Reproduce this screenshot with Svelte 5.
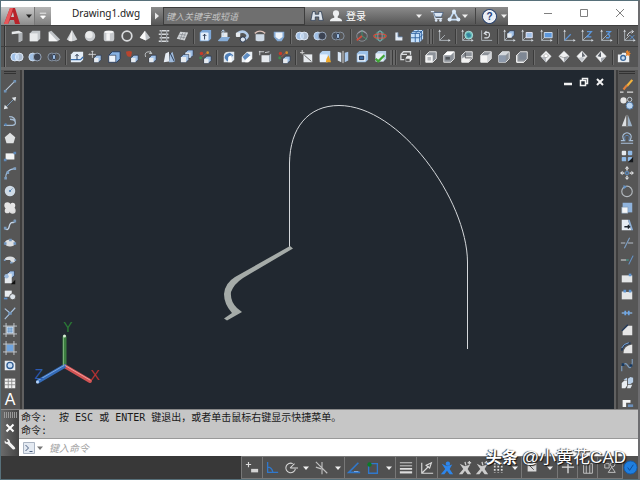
<script>
  const L = '#e6eaee', B = '#a0c0e6', D = '#1d2b45';
  const box = (x, y, s, c = L) => `<rect x="${x}" y="${y}" width="${s}" height="${s}" rx="1" fill="${c}"/>`;
  const cube = (x, y, s, a = L, b = B) =>
    `<path d="M${x} ${y + 3}l3-3h${s}v${s}l-3 3h-${s}z" fill="${b}" stroke="${D}" stroke-width=".7"/><rect x="${x}" y="${y + 3}" width="${s}" height="${s}" fill="${a}"/>`;
  const axes = `<path d="M3 1.500V13H15M3 13l6-6" fill="none" stroke="#b4bac1"/><path d="M1.500 3L3 .5 4.500 3zM13 11.500l2.500 1.500-2.500 1.500z" fill="#d3d7dc"/>`;
  const wire = (inner) => `<path d="M2 6l4-4h8v8l-4 4H2z" fill="#8d9299" stroke="#f0f0f0"/>${inner}`;
  const gem = (inner) => `<path d="M8 1l6 6-6 7-6-7z" fill="#f0f1f2" stroke="#c9ccd0" stroke-width=".6"/>${inner}`;

  const icons = {
    polysolid: '<path d="M2 3l8-1 4 2v9l-4 2V5L2 6z" fill="#e6e8ea"/><path d="M10 5v10l4-2V4z" fill="#aeb2b6"/>',
    box: '<path d="M2 5l3-3h9v9l-3 3H2z" fill="#c4c8cb"/><path d="M2 5h9v9H2z" fill="#e9ebec"/>',
    wedge: '<path d="M2 3l3-1 10 10-3 2H2z" fill="#bfc3c7"/><path d="M2 3v11h10z" fill="#f4f5f6"/>',
    cone: '<path d="M8 1l6 11q-6 4-12 0z" fill="#cfd2d5"/><path d="M8 1v13q-3 0-4-1z" fill="#efefef"/>',
    sphere: '<circle cx="8" cy="8" r="6" fill="#c9ccd0"/><circle cx="7" cy="6.500" r="4" fill="#eaebec"/>',
    cylinder: '<rect x="2" y="2" width="12" height="12" rx="3" fill="#c6c9cc"/><path d="M5 5h4v8H5z" fill="#f3f3f3"/><ellipse cx="8" cy="3.500" rx="5" ry="1.500" fill="#f6f6f6"/>',
    torus: '<circle cx="8" cy="8" r="5.500" fill="none" stroke="#d9dbdd" stroke-width="2"/>',
    pyramid: '<path d="M8 2l6 8-5 3-7-3z" fill="#bfc3c7"/><path d="M8 2l1 11-7-3z" fill="#fafafa"/>',
    helix: '<path d="M3 2h11M2 6h11M3 10h11M2 14h11" stroke="#d6d9dc" stroke-width="1.800"/><path d="M5 1v14M11 1v14" stroke="#9da1a6" stroke-width="1.500"/>',
    planar: '<path d="M6 3l9 1-4 9-9-2z" fill="#d3d6d9"/><path d="M5 6l8 1M4 9l8 1M9 4l-3 8M12 4l-3 8" stroke="#85898f" stroke-width=".8"/>',
    extrude: `<path d="M2 4l3-3h10v10l-3 3H2z" fill="#7ea8d8"/>${box(3, 4, 9, '#e3effb')}<path d="M7.500 12V6M5.500 8l2-2 2 2" stroke="${D}" fill="none"/>`,
    presspull: `<path d="M5 4h7v8H5z" fill="${L}"/><path d="M1 13l4-4h10l-3 5H2z" fill="#86add8"/><path d="M7 8V1M5 3l2-2 2 2" stroke="#b9d2ef" fill="none"/>`,
    sweep: `<path d="M3 5q6-4 10 0t-3 7" fill="none" stroke="#b4cdea" stroke-width="3"/>${box(1, 4, 5)}<circle cx="9" cy="12" r="3" fill="#dce4ee" stroke="${D}"/>`,
    revolve: `<path d="M2 5q6-5 12 0" fill="none" stroke="#dbc0b8" stroke-width="1.500"/><path d="M3 6h10v7q-5 2-10 0z" fill="#cfdae6"/>`,
    loft: `<path d="M2 3h12v6l-3 5H6L2 9z" fill="#83a9d4"/><path d="M4 4h8v5l-4 3-4-3z" fill="#eff4fa"/>`,
    union: `<circle cx="5.500" cy="8" r="4.500" fill="${B}" stroke="#e5eefa"/><circle cx="10.500" cy="8" r="4.500" fill="#c6daf2" fill-opacity=".8" stroke="#e5eefa"/>`,
    subtract: `<circle cx="5.500" cy="8" r="4.500" fill="${B}" stroke="#d2e0f2"/><circle cx="10.500" cy="8" r="4.500" fill="#3c4352" stroke="#a5b5c9"/>`,
    intersect: `<circle cx="5.500" cy="8" r="4.500" fill="#49505c" stroke="#8c99aa"/><circle cx="10.500" cy="8" r="4.500" fill="none" stroke="#8c99aa"/><path d="M8 4.500q4 3.500 0 7-4-3.500 0-7" fill="${B}" stroke="${D}"/>`,
    orbit: '<circle cx="8" cy="8" r="6" fill="none" stroke="#8a9098"/><path d="M8 1v7l6 4" stroke="#3c9d76" fill="none"/><path d="M8 8l-6 5" stroke="#d24b3b" stroke-width="2"/><path d="M3 5l5-3 5 3" stroke="#aab" fill="none"/>',
    gizmo: '<circle cx="8" cy="8" r="5" fill="none" stroke="#3fa08a" stroke-width="1.500"/><ellipse cx="8" cy="8" rx="7" ry="2.500" fill="none" stroke="#d2503f" stroke-width="1.500"/><ellipse cx="8" cy="8" rx="2.500" ry="6" fill="none" stroke="#94a2b6"/>',
    lshape: '<path d="M5 4h3v5h5v4H5z" fill="#e3ecf7"/><path d="M8 4v5h5" stroke="#6d8db3" fill="none"/>',
    mesh: `<path d="M1 5l4-4h10v10l-4 4H1z" fill="#c6e0fa"/><path d="M1 10h10l4-4M6 5v10M1 5h10v10M11 5l4-4M3 3h10v10M6 5l4-4" stroke="#2b5f9d" fill="none"/>`,
    ucs: axes,
    ucsBlue: axes + '<path d="M3 13l7-7" stroke="#5b93d6" stroke-width="1.500"/>',
    ucsWorld: axes + '<circle cx="10" cy="7" r="4.500" fill="#65bdb5" stroke="#b5dfe3"/><path d="M7 6q3-3 5 0t-3 4" fill="#3784a0"/>',
    ucsPrev: '<path d="M3 1.500V13H15" fill="none" stroke="#b4bac1"/><path d="M6 10q6 1 6-3.500T6 5M8.500 2.500L6 5l3 2" fill="none" stroke="#dce2e8" stroke-width="1.300"/>',
    ucsFace: axes + `<g transform="translate(6,2)">${cube(0, 0, 5)}</g>`,
    ucsObj: axes + `<path d="M7 4h7v6H7z" fill="${B}" stroke="#eef"/>`,
    ucsView: axes + '<path d="M6 4h9v6H6z" fill="#5c97dc" stroke="#d6e5f6"/>',
    ucsZ: axes + '<path d="M8 3h5L8 9h5" fill="none" stroke="#5c97dc" stroke-width="1.500"/>',
    ucs3: axes + '<path d="M8 3h5l-3 3q4 1 1 4H8" fill="none" stroke="#5c97dc" stroke-width="1.500"/>',
    ucsX: axes + '<path d="M6 8q1-5 7-5M11 1l2 2-2 2" fill="none" stroke="#e1e5ea"/><path d="M9 7l5 5M14 7l-5 5" stroke="#5c97dc"/>',
    extrFace: `<path d="M1 5l3-3h11v9l-3 3H1z" fill="#e5eef8"/><path d="M1 11h11l3-3" fill="none" stroke="#3c70ad" stroke-width="1.500"/><path d="M8 11V5M6 7l2-2 2 2" stroke="${D}" fill="none"/>`,
    moveFace: `<path d="M5 1v8M1 5h8M4 2l1-1 1 1M2 4L1 5l1 1" stroke="#d2d4d7" fill="none"/><g transform="translate(7,6)">${cube(0, 0, 5)}</g>`,
    offFace: `<path d="M2 6l4-4h9v8l-4 4H2z" fill="#89b3e3" stroke="#1f3557"/><path d="M2 6h8v8H2z" fill="#eff5fc" stroke="${D}" stroke-width=".7"/>`,
    delFace: `<path d="M1 2q4-2 7 0l-1 5q-3 2-5-1z" fill="#b8452f"/><g transform="translate(7,6)">${cube(0, 0, 5)}</g>`,
    rotFace: `<path d="M3 8Q1 2 7 2l3 2M8 1l2 3H7" stroke="#c5c9cd" fill="none"/><g transform="translate(7,6)">${cube(0, 0, 5)}</g>`,
    taper: `<path d="M2 14L4 4l4-2v11z" fill="#e5ebf2"/><path d="M8 14l1-9 3-3 3 11-3 1z" fill="#9fbbdc"/><path d="M9 3l5 10" stroke="${D}"/>`,
    copyFace: `<g transform="translate(6,0)">${cube(0, 0, 6)}</g><g transform="translate(1,5)">${cube(0, 0, 6)}</g>`,
    colFace: `<circle cx="4" cy="4" r="2" fill="#c63b2b"/><circle cx="11" cy="3" r="1.500" fill="#d9942c"/><circle cx="3" cy="9" r="1.500" fill="#3d8f4d"/><path d="M10 3l-5 5" stroke="#c44f39"/><g transform="translate(7,7)">${cube(0, 0, 5)}</g>`,
    fillet: `<path d="M2 14V7q0-5 6-5h6v9l-3 3z" fill="#dfe7ef"/><path d="M3 9q0-5 6-6l4 3-7 7z" fill="#4f7fb8"/><path d="M7 9q0-2 4-3v8H7z" fill="#fff"/>`,
    chamfer: `<path d="M2 8l6-6h6v8l-4 4H2z" fill="#e9eef3"/><path d="M3 8l5-5 4 3-6 6z" fill="#5f8dc2"/><path d="M6 11l6-5v5l-3 3H6z" fill="#fff"/>`,
    copyEdge: `<path d="M1 2h6M2 1v5M8 3l5-1" stroke="#d7dade"/><path d="M4 6h9v8H4z" fill="${L}"/><path d="M13 6l2-2v8l-2 2" fill="#a6b6c8"/>`,
    imprint: `<path d="M4 5h10v9H4z" fill="${L}"/><path d="M5 6l8 7" stroke="#555"/><path d="M0 3h5M2.500 0v5" stroke="#ddd"/>`,
    clean: `<path d="M2 4l3-3h9v11H2z" fill="#b4d1ef"/><path d="M2 5h9v9H2z" fill="#e9f3fd"/><path d="M9 14q0-4 3-8l3 8z" fill="#eda728"/>`,
    separate: '<path d="M2 2l4 1v11l-4-2z" fill="#dbe8f6"/><path d="M14 2l-4 1v11l4-2z" fill="#a9c8ec"/><path d="M8 1v14" stroke="#e8e8e8"/>',
    shell: `<path d="M2 4l3-3h10v10l-3 3H2z" fill="#9cc1e8"/><path d="M3 5h9v8H3z" fill="#e7f1fb"/><path d="M5 7h5v4H5z" fill="#3a68a2" stroke="${D}"/>`,
    check: '<path d="M3 4l3-3h9v9l-3 3H3z" fill="#b7cfe8"/><path d="M3 4h9v9H3z" fill="#e6eef6"/><path d="M3 10l3 3 7-7" stroke="#3fa536" stroke-width="2.500" fill="none"/>',
    views: '<path d="M1 5l3-3h8v4M1 5h7M1 5v6h4" fill="none" stroke="#dadde0" stroke-width="1.500"/><path d="M6 9l2-3h6v5l-2 3H6z" fill="#e8eaec" stroke="#333" stroke-width=".7"/><path d="M7 10h4v3H7z" fill="#555"/>',
    vTop: wire('<path d="M2 6h8v8H2z" fill="#f3f3f3"/><path d="M4 8h4v4H4z" fill="#b9bcc0"/>'),
    vBot: wire('<path d="M2 6l4-4h8l-4 4z" fill="#fff"/><path d="M4 8h5v3H4z" fill="#54585d"/>'),
    vLeft: wire('<path d="M2 10l4-3h8l-4 7H2z" fill="#f1f1f1"/><path d="M6 3v6h7" stroke="#4a4d51" fill="none"/>'),
    vRight: wire('<path d="M2 6h8v8H2z" fill="#f4f4f4"/><path d="M10 6l4-4v8l-4 4z" fill="#d1d4d8"/>'),
    vFront: wire('<path d="M2 6h8v8H2z" fill="#8d99ab"/><path d="M2 6l4-4h8l-4 4z" fill="#d3d7dc"/>'),
    vBack: wire('<path d="M5 3h8v8H5z" fill="#7e8794"/><path d="M2 6v8h8" stroke="#fff" fill="none"/>'),
    gSW: gem('<path d="M8 8v6L3 8z" fill="#b6bac0"/><path d="M8 4l3 3-3 2-3-2z" fill="#fff" stroke="#888" stroke-width=".7"/>'),
    gSE: gem('<path d="M8 8v6l5-6z" fill="#a6abb2"/><path d="M3 7l5 2 5-2" stroke="#888" fill="none" stroke-width=".7"/>'),
    gNE: gem('<path d="M8 2v6l4-1z" fill="#666c74"/><path d="M8 8l-4 1 4 4 3-4z" fill="#c2c6cb"/>'),
    gNW: gem('<path d="M8 2v6L4 7z" fill="#5a6068"/><path d="M8 9l5-1-5 6z" fill="#a4a9b1"/>'),
    camera: '<path d="M1 5h4l1-2h4l1 2h3v9H1z" fill="#e9edf1"/><circle cx="7" cy="9" r="3.500" fill="#38679c"/><circle cx="7" cy="9" r="2" fill="#c9dcf0"/><path d="M12 0l1 2 2-1-1 2 2 1-2 1 1 2-3-1-2 1 1-3-1-2z" fill="#e8842c"/>',

    line: '<path d="M3 13L13 3" stroke="#b9c8d8" stroke-width="1.200"/><path d="M1 12.500h3v3H1zM12 1h3v3h-3z" fill="#6f93b8"/>',
    xline: '<path d="M3 13L13 3" stroke="#7da1c4"/><path d="M1 15l1-5 4 4zM15 1l-1 5-4-4z" fill="#dfe3e7"/>',
    pline: '<path d="M1 13h10q4-1 3-4t-6-3M7 3q7 0 7 6" fill="none" stroke="#a5bbd2" stroke-width="1.500"/><circle cx="3" cy="12" r="1.500" fill="#5483b4"/>',
    polygon: '<path d="M8 2l6 5-2 7H4L2 7z" fill="#e0e2e3"/>',
    rect: '<path d="M3 5h10v7H3z" fill="#f2f4f5"/><path d="M1 11h3v3H1zM12 3h3v3h-3z" fill="#5e89b9"/>',
    arc: '<path d="M3 14Q3 4 13 3" fill="none" stroke="#a9c3df" stroke-width="1.300"/><path d="M1.500 12.500h3v3h-3zM12 1.500h3v3h-3zM4 6h3v3H4z" fill="#7f9fc0"/>',
    circle: '<circle cx="8" cy="8" r="6" fill="#cfdbe6"/><path d="M8 8l3-3" stroke="#6f94bb"/><circle cx="8" cy="8" r="1.200" fill="#4d7dae"/>',
    cloud: '<circle cx="5" cy="5" r="3.500" fill="#e4e4e4"/><circle cx="11" cy="5" r="3" fill="#e8e8e8"/><circle cx="5" cy="11" r="3" fill="#e2e2e2"/><circle cx="11" cy="11" r="3.500" fill="#ddd"/><path d="M3 4h10v8H3z" fill="#e4e4e4"/>',
    spline: '<path d="M2 12q4 3 5-2t4-5q2 1 3-3" fill="none" stroke="#c6d6e8" stroke-width="1.500"/><path d="M1 10h3v3H1zM12 2h3v3h-3z" fill="#7899bb"/>',
    ellipse: '<ellipse cx="8" cy="8" rx="6" ry="4" fill="#dcdfe2"/><path d="M1 7h3v3H1zM12 7h3v3h-3zM7 3h3v3H7z" fill="#6c92bd"/>',
    earc: '<path d="M2 8q0-4 6-4t6 4q0 3-4 3l-2-3z" fill="#dcdfe2"/><path d="M1 7h2v2H1zM13 7h2v2h-2zM8 10h3v2H8z" fill="#7d9fc4"/>',
    insert: `<g transform="translate(5,0)">${cube(0, 0, 5)}</g><path d="M2 8h8v6H2z" fill="${L}"/><circle cx="4" cy="6" r="2.500" fill="#9dbbdf"/><path d="M14 10v5H9z" fill="#111"/>`,
    block: '<path d="M2 3h8v7H2z" fill="#e9edf1"/><circle cx="11" cy="10" r="3.500" fill="#dce3ea" stroke="#555"/><path d="M1 11h4v2H1z" fill="#5d8fc9"/>',
    point: '<path d="M2 3l6 5M2 15L14 2" stroke="#a9c3df" fill="none" stroke-width="1.300"/><path d="M6 7h4v3H6z" fill="#7095bd"/>',
    hatch: '<path d="M4 4h8v8H4z" fill="#d7e7f8"/><path d="M3.500 0v16M12.500 0v16M0 3.500h16M0 12.500h16" stroke="#cbd1d7"/><path d="M5 6h6M5 8h6M5 10h6M6 5v6M8 5v6M10 5v6" stroke="#4d83bd" stroke-width=".7"/>',
    gradient: '<path d="M4 4h8v8H4z" fill="#6fa4de"/><path d="M3.500 0v16M12.500 0v16M0 3.500h16M0 12.500h16" stroke="#cbd1d7"/>',
    region: '<path d="M2 3h9l3 3v8H2z" fill="#e5eaf0"/><circle cx="8" cy="8.500" r="3.500" fill="#c7dcf3" stroke="#315e93" stroke-width="1.500"/>',
    table: '<path d="M2 3h12v11H2z" fill="#f2f2f2"/><path d="M2 6h12M2 10h12M6 3v11M10 3v11" stroke="#888"/>',

    erase: '<path d="M14 1L8 8" stroke="#f2b33d" stroke-width="2.500"/><path d="M8 7l-4 5" stroke="#e0803c" stroke-width="2.500"/><path d="M0 15h4M8 15h7" stroke="#d9d9d9" stroke-width="1.200"/>',
    copy: '<circle cx="4" cy="5" r="3.500" fill="#e6e6e6"/><circle cx="11" cy="4" r="2.500" fill="none" stroke="#c9d3de"/><circle cx="11" cy="11" r="4" fill="#bdd6f0" stroke="#4c76a5"/>',
    mirror: '<path d="M7 1v13H2z" fill="#dcdfe2"/><path d="M9 1v13h5z" fill="#9aafc4"/><path d="M8 1v14" stroke="#999"/>',
    offset: '<path d="M1 14h14M1 11h4Q2 7 4 4q4-4 8 0 2 3-1 7h4" stroke="#a9c0da" fill="none" stroke-width="1.300"/><path d="M6 11Q4 5 8 5t2 6" fill="none" stroke="#5f8cc0"/>',
    array: `${box(2, 2, 5)}${box(9, 2, 5, '#8fb9e6')}${box(2, 9, 5, '#8fb9e6')}${box(9, 9, 5, '#8fb9e6')}<path d="M15 9v6H9z" fill="#15181c"/>`,
    move: '<path d="M8 0l2.500 3h-5zM8 16l2.500-3h-5zM0 8l3-2.500v5zM16 8l-3-2.500v5z" fill="#d9dbdd"/><path d="M8 3v2M8 11v2M3 8h2M11 8h2" stroke="#ccc" stroke-width="2"/><path d="M6.500 6.500h3v3h-3z" fill="none" stroke="#5f98d8"/>',
    rotate: '<circle cx="8" cy="8.500" r="6" fill="none" stroke="#b4babf" stroke-width="1.300"/><path d="M4 1l4 2-4 3z" fill="#6795c8"/>',
    scale: '<path d="M3 2h11v11H3z" fill="#8fb3dc"/><path d="M2 7h7v7H2z" fill="#f3f5f7" stroke="#7690ad" stroke-width=".6"/>',
    stretch: '<path d="M2 2h7l4 12H2z" fill="#e6edf5"/><path d="M9 2h2l4 12h-2z" fill="#8fb3dc"/><path d="M5 10h6M9 8l2 2-2 2" stroke="#1c2530" fill="none" stroke-width="1.500"/>',
    trim: '<path d="M1 8h5M9 8h6" stroke="#b3bcc6" stroke-width="1.200"/><path d="M5 14l6-12" stroke="#7da0c6" stroke-width="1.200"/>',
    extend: '<path d="M1 8h6" stroke="#d3d6d9" stroke-width="1.200"/><path d="M7 8h3" stroke="#38af9b"/><path d="M10 13l5-10" stroke="#6695c9" stroke-width="1.200"/>',
    breakPt: '<path d="M2 5h12v8H2z" fill="#e4e6e7"/><path d="M10 3h3v3h-3z" fill="#5e95d2"/>',
    brk: '<path d="M2 4h12v9H2z" fill="#e4e6e7"/><path d="M4 2h3v3H4zM10 2h3v3h-3z" fill="#5e95d2"/><path d="M7 4h3" stroke="#555"/>',
    join: '<path d="M2 8h12" stroke="#8ab4e2" stroke-width="1.500"/><path d="M5 5.500h2v5H5zM9 5.500h2v5H9z" fill="#6da7e8"/>',
    chamferE: '<path d="M3 14V9l6-6h5v11z" fill="#e6e6e6"/><path d="M2 9l7-7" stroke="#23395a" stroke-width="1.500"/>',
    filletE: '<path d="M4 14q0-9 10-10v10z" fill="#e6e6e6"/><path d="M2 11Q3 3 12 2.500" fill="none" stroke="#23395a" stroke-width="2"/><path d="M2 8q2-5 8-6" fill="none" stroke="#8db8ea"/>',
    blend: '<path d="M3 9q3-5 6 0t5-3M2 9v6M14 1v5" fill="none" stroke="#7e9ec0" stroke-width="1.300"/><path d="M2 6h3v3H2zM11 7h3v3h-3z" fill="#173a62"/>',
    explode: '<path d="M2 8l3-3h3v6l-2 3H2z" fill="#e9edf2"/><path d="M9 3l3-2 3 1v5l-3 2H9z" fill="#b9cfe7"/><path d="M9 10h5l-2 4H8z" fill="#e0e6ec"/><path d="M4 4l4-2v3z" fill="#b9cfe7"/>',
    order: '<path d="M3 8h9v3H7v5H3z" fill="#f4f4f4"/><path d="M9 13h6v3H9z" fill="#6b8fba"/>',

    binoc: '<path d="M3 3h3v3h4V3h3l2 10h-5V9H6v4H1z" fill="#dde4ec" stroke="#23334c" stroke-width=".8"/>',
    user: '<circle cx="8" cy="5" r="3.500" fill="#eef0f2"/><path d="M1 14q0-3 5-4V8h4v2q5 1 5 4z" fill="#eef0f2"/>',
    cart: '<path d="M1 3h3l2 8h8" fill="none" stroke="#dbe7f5" stroke-width="1.500"/><path d="M4 4h11l-2 5H6z" fill="#dbe7f5" stroke="#2c4a73" stroke-width=".7"/><circle cx="7" cy="13" r="1.500" fill="#dbe7f5"/><circle cx="12" cy="13" r="1.500" fill="#dbe7f5"/>',
    a360: '<path d="M8 3L3 12h10z" fill="none" stroke="#c4dcf5" stroke-width="2"/><circle cx="8" cy="3" r="2.300" fill="#dcebfa"/><circle cx="3" cy="12" r="2.300" fill="#dcebfa"/><circle cx="13" cy="12" r="2.300" fill="#dcebfa"/>',
    wrench: '<path d="M2 4q-1 4 3 4l6 6q2 1 3-1 0-1-1-2L8 6Q8 2 4 2l2 3-2 1z" fill="#f1f1f1"/>',

    sInfer: '<path d="M4 1v6M1 4h6" stroke="#ddd" stroke-width="1.300"/><path d="M7 9h8v4H7z" fill="#d4d4d4"/>',
    sOrtho: '<path d="M3 1v12h12M3 7q5 0 6 6" stroke="#3078cc" fill="none" stroke-width="1.500"/>',
    sPolar: '<path d="M13 9A5.500 5.500 0 1 1 10 3M7 8h9M7 8l5-5" stroke="#d8d8d8" fill="none" stroke-width="1.200"/>',
    sIso: '<path d="M1 1l13 13M8 1v14M1 7l6 2" stroke="#c0c0c0" fill="none" stroke-width="1.300"/>',
    sTrack: '<path d="M13 2L2 13h13" stroke="#3078cc" fill="none" stroke-width="1.800"/><path d="M8 12h5" stroke="#7db0ee"/>',
    sSnap: '<path d="M3 3h10v11H3z" stroke="#3078cc" fill="none" stroke-width="1.500"/><circle cx="4" cy="4" r="2.500" fill="#0c7a26"/>',
    sLwt: '<path d="M1 2h14M1 5.500h14" stroke="#ddd"/><path d="M1 9h14" stroke="#ddd" stroke-width="2"/><path d="M1 13h14" stroke="#ddd" stroke-width="2.500"/>',
    sDucs: '<path d="M2 2v12h13M2 14l8-8M7 5l6-3-2 6z" stroke="#d8d8d8" fill="none" stroke-width="1.300"/>',
    sMan: '<circle cx="9" cy="3" r="2.500" fill="currentColor"/><path d="M2 3l6 3 6-2-3 5 4 6h-4l-3-4-3 4H1l5-6z" fill="currentColor"/>',
    sManPlus: '<path d="M2 3l6 3 6-2-3 5 4 6h-4l-3-4-3 4H1l5-6z" fill="currentColor"/><path d="M8 1l1 4M11 2h4M13 0v4" stroke="currentColor" stroke-width="1.500"/>',
    sGear: '<path d="M2 2v11M6 2v11M10 2v11" stroke="#d8d8d8" stroke-width="2" stroke-dasharray="2 1.500"/>',
    sScale: '<path d="M3 2h10v10H3z" fill="#d8d8d8"/><path d="M5 5l5 5" stroke="#444"/>',
    sPlus: '<path d="M8 1v13M1 7h14" stroke="#ddd" stroke-width="1.500"/>',
    sIso2: '<path d="M3 3h10v11H3zM6 3v11M10 3v11" stroke="#ccc" fill="none"/>',
    sShape: '<path d="M2 3h5v5H2zM6 13l4-6 4 6z" stroke="#ccc" fill="none"/><circle cx="11" cy="4" r="2.500" stroke="#ccc" fill="none"/>'
  };

  const row1 = [
    ['polysolid', 'box', 'wedge', 'cone', 'sphere', 'cylinder', 'torus', 'pyramid', 'helix', 'planar'],
    ['extrude', 'presspull', 'sweep', 'revolve', 'loft'],
    ['union', 'subtract', 'intersect'],
    ['orbit', 'gizmo', 'lshape', 'mesh'],
    ['ucs'], ['ucsWorld', 'ucsPrev'], ['ucsFace', 'ucsObj', 'ucsView'], ['ucsBlue', 'ucsZ', 'ucs3'], ['ucsX']
  ];
  const row2 = [
    ['union', 'subtract', 'intersect'],
    ['extrFace', 'moveFace', 'offFace', 'delFace', 'rotFace', 'taper', 'copyFace', 'colFace'],
    ['fillet', 'chamfer', 'copyEdge', 'colFace'],
    ['imprint', 'clean', 'separate', 'shell', 'check'],
    ['views'], ['vTop', 'vBot', 'vLeft', 'vRight', 'vFront', 'vBack'], ['gSW', 'gSE', 'gNE', 'gNW'], ['camera']
  ];
  const bars = [
    { label: '建模', groups: row1, wide: 4 },
    { label: '实体编辑', groups: row2, wide: 4, end: true }
  ];
  const draw = ['line', 'xline', 'pline', 'polygon', 'rect', 'arc', 'circle', 'cloud', 'spline', 'ellipse', 'earc', 'insert', 'block', 'point', 'hatch', 'gradient', 'region', 'table'];
  const modify = ['erase', 'copy', 'mirror', 'offset', 'array', 'move', 'rotate', 'scale', 'stretch', 'trim', 'extend', 'breakPt', 'brk', 'join', 'chamferE', 'filletE', 'blend', 'explode', 'order'];
  const status = [
    { w: 21, items: ['sInfer'] },
    { w: 82, items: ['sOrtho', 'sPolar', '▾', 'sIso', '▾'] },
    { w: 51, items: ['sTrack', 'sSnap', '▾'] },
    { w: 21, items: ['sLwt'] },
    { w: 21, items: ['sDucs'] },
    { w: 84, items: ['sMan', 'sManPlus', 'sManPlus', 'sGear', '▾'], men: true },
    { w: 36, items: ['sScale', '▾'] },
    { w: 20, items: ['sPlus'] },
    { w: 20, items: ['sIso2'] },
    { w: 25, items: ['sShape'] }
  ];
  let command = $state('');
  let query = $state('');
</script>

{#snippet icon(name)}
  <svg class="ic" viewBox="0 0 16 16" aria-hidden="true">{@html icons[name]}</svg>
{/snippet}

{#snippet down()}
  <svg class="down" viewBox="0 0 8 8" aria-hidden="true"><path d="M1 2.500h6L4 6z" /></svg>
{/snippet}

<div class="app">
  <header>
    <button class="logo" aria-label="应用程序菜单">
      <svg viewBox="0 0 18 18" width="18" height="18"><path d="M1 17L7 1h5l5 16h-5l-1-4H7l-2 4z" fill="#b8232a" /><path d="M7 1h3L5 17H1z" fill="#e8575a" /><path d="M8 10l2-5 1 5z" fill="#c8c8c8" /></svg>
      <svg class="dark down" viewBox="0 0 8 8"><path d="M1 2.500h6L4 6z" /></svg>
    </button>
    <button class="qat" aria-label="快速访问工具栏">
      <svg viewBox="0 0 10 10" width="8" height="8"><path d="M1 1.500h8M2 5h6L5 8.500z" fill="#fff" stroke="#fff" /></svg>
    </button>
    <h1>Drawing1.dwg</h1>
    <div class="info">
      <svg class="more" viewBox="0 0 12 12" width="12" height="12"><path d="M4 2.500v7L8 6z" fill="#e8e8e8" /></svg>
      <input class="search" type="text" aria-label="搜索" placeholder="键入关键字或短语" bind:value={query} />
      <button aria-label="搜索帮助">{@render icon('binoc')}</button>
      <button class="login">{@render icon('user')}<span>登录</span></button>
      <button class="push" aria-label="登录选项">{@render down()}</button>
      <button aria-label="商店">{@render icon('cart')}</button>
      <button aria-label="A360">{@render icon('a360')}{@render down()}</button>
      <i class="vsep"></i>
      <button aria-label="帮助"><span class="help">?</span></button>
      <button aria-label="帮助选项">{@render down()}</button>
    </div>
    <div class="win">
      <button aria-label="最小化"><svg viewBox="0 0 10 10"><path d="M1 5.500h8" /></svg></button>
      <button aria-label="最大化"><svg viewBox="0 0 10 10"><path d="M1.500 1.500h7v7h-7z" /></svg></button>
      <button aria-label="关闭"><svg viewBox="0 0 10 10"><path d="M1 1l8 8M9 1L1 9" /></svg></button>
    </div>
  </header>

  {#each bars as bar}
    <div class="bar" class:end={bar.end} role="toolbar" aria-label={bar.label}>
      {#each bar.groups as g, i}
        {#if i}<i class="sep" class:wide={i === bar.wide}></i>{/if}
        {#each g as name}
          <button class="tool" aria-label={name}>{@render icon(name)}</button>
        {/each}
      {/each}
    </div>
  {/each}

  <main>
    <div class="side left" role="toolbar" aria-label="绘图">
      {#each draw as name}
        <button class="tool" aria-label={name}>{@render icon(name)}</button>
      {/each}
      <button class="tool letter">A</button>
    </div>
    <div class="canvas">
      <svg class="scene" viewBox="24 70 590 339" role="img" aria-label="模型空间">
        <path d="M289.500 247V163C290 128 308 105.500 339 105.500C400 105.500 467 200 467.500 262V349" fill="none" stroke="#d5d8db" />
        <path d="M290 246l3 2.500L243 278Q234 284 231 292Q230 301 237 308L242 312L227 320.500L224 318.500L232 313Q224 304 224 294Q225 283 235 277Z" fill="#a5aba8" />
        <g stroke-width="4" stroke-linecap="round">
          <path d="M64.500 366V337" stroke="#3c7f40" />
          <path d="M64.500 366L90 381" stroke="#d05353" />
          <path d="M64.500 366L38 381.500" stroke="#356cb8" />
        </g>
        <g stroke-width="1" stroke-linecap="round">
          <path d="M63.500 366V337" stroke="#79ae78" />
          <path d="M65 365.500L90 380" stroke="#f39a9a" />
          <path d="M64 365.500L38 380.500" stroke="#78a5e2" />
        </g>
        <circle cx="64.500" cy="336" r="1.500" fill="#d7ecd7" />
        <circle cx="37.500" cy="382" r="1.500" fill="#b8d4f6" />
        <g class="axis">
          <text x="68" y="332" fill="#2b7d36">Y</text>
          <text x="95" y="380" fill="#b93232">X</text>
          <text x="39" y="379" fill="#2c5cb0">Z</text>
        </g>
      </svg>
      <div class="mdi">
        <button aria-label="最小化图形"><svg viewBox="0 0 10 10"><path d="M1 7h8" stroke-width="2.500" /></svg></button>
        <button aria-label="还原图形"><svg viewBox="0 0 10 10"><path d="M1.500 3.500h5v5h-5zM3.500 3V1.500h5v5H7" /></svg></button>
        <button aria-label="关闭图形"><svg viewBox="0 0 10 10"><path d="M2 2l6 6M8 2L2 8" stroke-width="2" /></svg></button>
      </div>
    </div>
    <div class="side right" role="toolbar" aria-label="修改">
      {#each modify as name}
        <button class="tool" aria-label={name}>{@render icon(name)}</button>
      {/each}
    </div>
  </main>

  <section class="cmd">
    <div class="handle">
      <i class="grip"></i>
      <button aria-label="关闭命令行"><svg viewBox="0 0 10 10" width="10" height="10"><path d="M1.500 1.500l7 7M8.500 1.500l-7 7" stroke="#fff" stroke-width="2" /></svg></button>
      <button aria-label="自定义">{@render icon('wrench')}</button>
    </div>
    <div class="lines">
      <div class="history">
        <p>命令:  按 ESC 或 ENTER 键退出，或者单击鼠标右键显示快捷菜单。</p>
        <p>命令:</p>
      </div>
      <div class="prompt">
        <button class="recent" aria-label="近期使用的命令">
          <svg viewBox="0 0 12 12" width="12" height="12"><path d="M.5.5h11v11H.5z" fill="#e4eaf2" stroke="#aab4c2" /><path d="M2.500 3l3 3-3 3M6.500 9.500h3" fill="none" stroke="#4a5f80" /></svg>
          <svg class="dim down" viewBox="0 0 8 8"><path d="M1 2.500h6L4 6z" /></svg>
        </button>
        <input type="text" aria-label="命令" placeholder="键入命令" bind:value={command} />
      </div>
    </div>
  </section>

  <footer>
    {#each status as s}
      <div class="cell" style:flex-basis="{s.w}px">
        {#each s.items as name, i}
          {#if name === '▾'}
            <button aria-label="选项">{@render down()}</button>
          {:else}
            <button class:on={s.men && i === 0} aria-label={name}>{@render icon(name)}</button>
          {/if}
        {/each}
      </div>
    {/each}
    <button class="round" aria-label="硬件加速"><svg viewBox="0 0 16 16" width="15" height="15"><circle cx="8" cy="8" r="7" fill="#1f7fe0" stroke="#125bab" /><path d="M5 8l2 3 4-6" fill="none" stroke="#0d4a94" /></svg></button>
    <div class="mark"><b>头条</b><span>@小黄花CAD</span></div>
  </footer>
</div>

<style>
  :global(body) { margin: 0; }
  .app {
    box-sizing: border-box; height: 100vh; display: flex; flex-direction: column;
    border: 1px solid #57707a; border-right: 2px solid #6d6d70; background: #565656; overflow: hidden;
    font-family: "Open Sans", "Noto Sans CJK SC", sans-serif; font-size: 10px; color: #fff;
  }
  button { border: 0; padding: 0; margin: 0; background: none; color: inherit; font: inherit; display: flex; align-items: center; justify-content: center; }
  input { border: 0; padding: 0; margin: 0; min-width: 0; outline: 0; box-sizing: border-box; }
  p, h1 { margin: 0; }
  .ic { width: 14px; height: 14px; flex: none; display: block; }
  .down { width: 8px; height: 8px; flex: none; fill: #f0f0f0; }
  .dark { fill: #222; }
  .dim { fill: #777; }

  header { flex: 0 0 24px; display: flex; background: #fff; }
  .logo, .qat, .info { margin-top: 6px; }
  .logo { flex: 0 0 33px; gap: 4px; background: linear-gradient(#c9c9c9, #8c8c8c); }
  .qat { flex: 0 0 17px; background: linear-gradient(#b4b4b4, #7f7f7f); border-left: 1px solid #777; }
  h1 { flex: 0 0 100px; box-sizing: border-box; padding-left: 10px; font: 400 10px/24px "Noto Sans", sans-serif; color: #222; text-align: center; }
  .info { flex: 1; display: flex; align-items: center; gap: 3px; background: linear-gradient(#8b8b8b, #555); min-width: 0; }
  .more { flex: none; margin-right: -3px; }
  .search { flex: 0 1 142px; align-self: stretch; margin-right: 2px; background: #6f6f6f; border: 1px solid #3d3d3d; font: italic 9px "Noto Sans CJK SC", sans-serif; color: #fff; padding-left: 2px; }
  .search::placeholder { color: #c4c4c4; opacity: 1; }
  .login { gap: 3px; margin-left: 2px; }
  .login span { line-height: 16px; }
  .push { margin-left: auto; margin-right: 4px; }
  .vsep { width: 1px; height: 16px; margin: 0 3px; background: #444; }
  .help { width: 11px; height: 11px; border: 1px solid #fff; border-radius: 50%; background: #e7edf6; color: #1f3c78; font: bold 10px/11px "Liberation Sans", sans-serif; text-align: center; box-shadow: 0 0 0 1px #2e4874; margin: 0 1px; }
  .win { flex: 0 0 130px; display: flex; justify-content: flex-end; }
  .win button { width: 36px; }
  .win svg { width: 10px; height: 10px; fill: none; stroke: #808080; }

  .bar { flex: 0 0 21px; box-sizing: border-box; display: flex; align-items: center; padding-left: 7px; border-top: 1px solid #3f3f3f; background: linear-gradient(90deg, #333 1px, #777 1px, #777 2px, #555 2px) 3px 0 no-repeat, #565656; }
  .bar.end { padding-right: 5px; }
  .tool { flex: 1 1 16px; min-width: 0; min-height: 0; }
  .sep { flex: 0 0 5px; height: 15px; background: linear-gradient(90deg, transparent 2px, #3b3b3b 2px, #3b3b3b 3px, #6d6d6d 3px, #6d6d6d 4px, transparent 4px); }
  .sep.wide { flex-basis: 9px; background: repeating-linear-gradient(90deg, #3b3b3b 0 1px, #686868 1px 3px); background-clip: content-box; padding: 0 1px; box-sizing: border-box; }

  main { flex: 1; min-height: 0; display: flex; border-top: 3px solid #6a6a6a; }
  .side { box-sizing: border-box; display: flex; flex-direction: column; background: #565656; padding-top: 7px; }
  .side::before { content: ""; height: 3px; margin: -6px 3px 3px; border-top: 1px solid #333; border-bottom: 1px solid #333; box-sizing: border-box; flex: none; }
  .side .tool { flex: 1 1 0; }
  .left { flex: 0 0 23px; padding-right: 3px; border-right: 2px solid #606060; box-shadow: inset -2px 0 #3d3d3d; }
  .right { flex: 0 0 24px; border-left: 2px solid #606060; box-shadow: inset 2px 0 #3d3d3d; }
  .letter { font: 16px/16px "Liberation Sans", sans-serif; color: #fff; }
  .canvas { flex: 1; min-width: 0; position: relative; background: #212830; }
  .scene { display: block; width: 100%; height: 100%; }
  .axis { font: 14px "Liberation Sans", sans-serif; text-anchor: middle; }
  .mdi { position: absolute; top: 7px; right: 9px; display: flex; gap: 6px; }
  .mdi svg { width: 10px; height: 10px; fill: none; stroke: #f2f2f2; stroke-width: 1.5px; }

  .cmd { flex: 0 0 47px; display: flex; border-top: 1px solid #888; box-sizing: border-box; }
  .handle { flex: 0 0 18px; display: flex; flex-direction: column; align-items: center; gap: 4px; background: linear-gradient(90deg, #6a6a6a, #444); }
  .grip { width: 13px; height: 6px; margin: 2px 0 1px; background: repeating-linear-gradient(90deg, #999 0 1px, transparent 1px 2px); }
  .lines { flex: 1; min-width: 0; display: flex; flex-direction: column; }
  .history { flex: 1; min-height: 0; padding: 1px 2px 0; background: #c6c6c6; color: #1a1a1a; font: 10px/13px "DejaVu Sans Mono", "Noto Sans CJK SC", monospace; }
  .history p { height: 13px; white-space: pre; }
  .prompt { flex: 0 0 18px; display: flex; align-items: center; gap: 5px; padding-left: 4px; background: #fff; border-top: 1px solid #999; box-sizing: border-box; }
  .recent { gap: 1px; }
  .prompt input { flex: 1; height: 16px; background: transparent; color: #222; font: italic 10px "Noto Sans CJK SC", sans-serif; }
  .prompt input::placeholder { color: #a2a2a2; opacity: 1; }

  footer { flex: 0 0 23px; position: relative; display: flex; justify-content: flex-end; align-items: stretch; background: #383838; }
  .cell { flex: 0 0 auto; box-sizing: border-box; display: flex; align-items: center; justify-content: space-around; border: 1px solid #777; border-right: 0; background: #505050; color: #ccc; }
  .cell .on { color: #2d86ec; }
  .round { flex: 0 0 16px; border-left: 1px solid #777; background: #505050; }
  .mark { position: absolute; right: 12px; top: -10px; display: flex; gap: 4px; font: 17px/24px "Liberation Sans", "Noto Sans CJK SC", sans-serif; color: #fff; text-shadow: 1px 1px 1px #111, -1px 0 1px #333; white-space: nowrap; }
  .mark b { font-size: 16px; }
</style>
